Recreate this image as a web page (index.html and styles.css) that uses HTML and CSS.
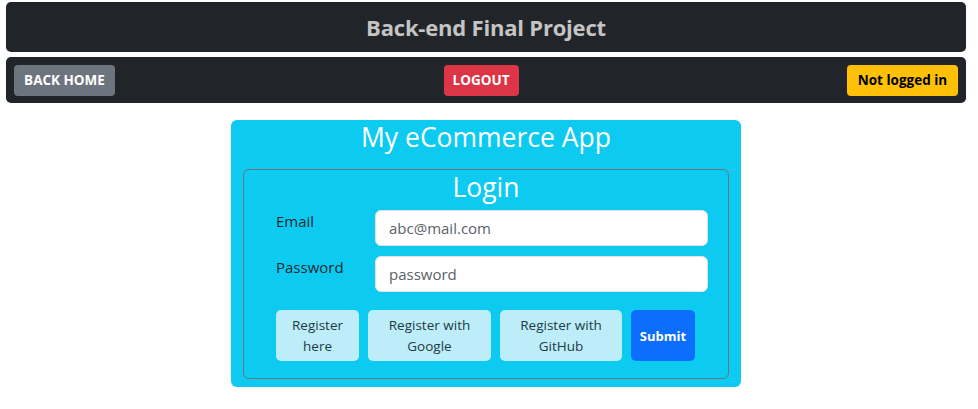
FILE: index.html
```html
<!DOCTYPE html>
<html lang="en">
<head>
<meta charset="utf-8">
<title>Back-end Final Project</title>
<link rel="stylesheet" href="styles.css">
</head>
<body>
<div class="page">
  <header class="topbar">
    <h1 class="title">Back-end Final Project</h1>
  </header>
  <nav class="navbar">
    <button class="btn btn-gray">BACK HOME</button>
    <button class="btn btn-red">LOGOUT</button>
    <span class="badge-yellow">Not logged in</span>
  </nav>
  <main class="card">
    <h2 class="card-title">My eCommerce App</h2>
    <section class="login">
      <h2 class="login-title">Login</h2>
      <form class="form">
        <div class="row">
          <label class="label" for="email">Email</label>
          <input class="input" id="email" type="email" placeholder="abc@mail.com">
        </div>
        <div class="row">
          <label class="label" for="pw">Password</label>
          <input class="input" id="pw" type="password" placeholder="password">
        </div>
        <div class="actions">
          <button type="button" class="btn-light w-here">Register<br>here</button>
          <button type="button" class="btn-light w-google">Register with<br>Google</button>
          <button type="button" class="btn-light w-github">Register with<br>GitHub</button>
          <button type="submit" class="btn-submit">Submit</button>
        </div>
      </form>
    </section>
  </main>
</div>
</body>
</html>
```
FILE: styles.css
```css
* { box-sizing: border-box; }
body {
  margin: 0;
  font-family: "Open Sans", "Noto Sans", sans-serif;
  background: #fff;
  color: #212529;
}
.page {
  margin: 2px 12px 0 6px;
}
.topbar {
  background: #212529;
  border-radius: 5px;
  height: 50px;
  display: flex;
  align-items: center;
  justify-content: center;
}
.title {
  margin: 0;
  font-size: 22px;
  font-weight: 700;
  color: #c4c4c4;
  letter-spacing: -0.2px;
}
.navbar {
  margin-top: 5px;
  background: #212529;
  border-radius: 5px;
  height: 46px;
  padding: 0 8px;
  display: flex;
  align-items: center;
  justify-content: space-between;
}
.btn, .badge-yellow {
  font-family: inherit;
  border: 0;
  border-radius: 4px;
  height: 31px;
  font-size: 13.5px;
  font-weight: 700;
  display: flex;
  align-items: center;
  justify-content: center;
  padding: 0;
}
.btn-gray { background: #6c757d; color: #fff; width: 101px; }
.btn-red { background: #dc3545; color: #fff; width: 75px; }
.badge-yellow { background: #ffc107; color: #000; width: 111px; }

.card {
  width: 510px;
  margin: 17px auto 0;
  background: #0dcaf0;
  border-radius: 6px;
  padding: 0 12px 8px;
}
.card-title, .login-title {
  margin: 0;
  text-align: center;
  color: #fff;
  font-weight: 400;
  font-size: 26.5px;
  line-height: 34px;
}
.card-title { margin-bottom: 15px; }
.login {
  border: 1px solid #6c757d;
  border-radius: 6px;
  padding: 0 0 16px;
  min-height: 210px;
}
.login-title { margin-bottom: 6px; }
.form {
  display: flex;
  flex-direction: column;
  padding: 0 20px 0 32px;
}
.row {
  display: flex;
  align-items: flex-start;
  margin-bottom: 10px;
}
.label {
  width: 99px;
  font-size: 15px;
  padding-top: 1px;
  color: #1d2b30;
}
.input {
  flex: 1;
  height: 36px;
  border: 1px solid #dee2e6;
  border-radius: 6px;
  padding: 0 13px;
  font-family: inherit;
  font-size: 15px;
  color: #212529;
  background: #fff;
}
.input::placeholder { color: #5b6168; }
.actions {
  margin-top: 8px;
  display: flex;
  gap: 9px;
}
.btn-light {
  height: 51px;
  border: 0;
  border-radius: 5px;
  background: #bdedf8;
  color: #1c3a44;
  font-family: inherit;
  font-size: 13.5px;
  line-height: 21px;
  padding: 0;
}
.w-here { width: 83px; }
.w-google { width: 123px; }
.w-github { width: 122px; }
.btn-submit {
  width: 64px;
  height: 51px;
  border: 0;
  border-radius: 5px;
  background: #0d6efd;
  color: #fff;
  font-family: inherit;
  font-weight: 700;
  font-size: 13px;
  padding: 0;
}
```
